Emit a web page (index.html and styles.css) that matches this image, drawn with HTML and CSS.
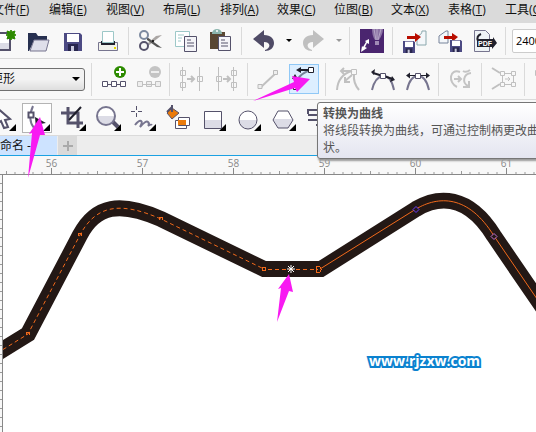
FILE: index.html
```html
<!DOCTYPE html>
<html lang="zh-CN">
<head>
<meta charset="utf-8">
<title>未命名 -1</title>
<link rel="stylesheet" href="styles.css">
</head>
<body>
<svg class="defs" aria-hidden="true">
  <defs>
    <linearGradient id="glass" x1="0" y1="0" x2="0" y2="1">
      <stop offset=".5" stop-color="#fff"/><stop offset=".5" stop-color="#dcdce6"/>
    </linearGradient>
    <symbol id="fly" viewBox="0 0 30 30"><path d="M28 21v7h-7z" fill="#000"/></symbol>
    <symbol id="disk" viewBox="0 0 18 18"><path d="M0 0h16l2 2v16H0z" fill="#4c4a83"/><path d="M3 1h12v8H3z" fill="#fff"/><path d="M4 11h10v7H4z" fill="#28264d"/><path d="M7 13h3v5H7z" fill="#c9c9dc"/></symbol>
    <symbol id="ticks" viewBox="0 0 91 6">
      <path d="M45.500 0v6" stroke="#888"/>
      <path d="M9 4v2M18 4v2M27 4v2M36 4v2M55 4v2M64 4v2M73 4v2M82 4v2" stroke="#999"/>
      <path d="M.5 3v3" stroke="#999"/>
    </symbol>
  </defs>
</svg>
<div class="app">
  <nav class="menu">
    <a href="#">文件(<u>F</u>)</a><a href="#">编辑(<u>E</u>)</a><a href="#">视图(<u>V</u>)</a><a href="#">布局(<u>L</u>)</a><a href="#">排列(<u>A</u>)</a><a href="#">效果(<u>C</u>)</a><a href="#">位图(<u>B</u>)</a><a href="#">文本(<u>X</u>)</a><a href="#">表格(<u>T</u>)</a><a href="#">工具(<u>O</u>)</a>
  </nav>

  <div class="bar standard">
    <button aria-label="新建"><svg viewBox="0 0 24 24"><path d="M2 4h17v17H2z" fill="#fff" stroke="#55526b" stroke-width="2"/><path d="M3 14h15v6H3z" fill="#dcdce6"/><path d="m20 1 1 2 3-1-1 3 2 1-2 1 1 3-3-1-1 2-1-2-3 1 1-3-2-1 2-1-1-3 3 1z" fill="#2d8b00" stroke="#2d8b00"/></svg></button>
    <button aria-label="打开"><svg viewBox="0 0 24 24"><path d="M2 4h8l2 3h9v5H8L3 22H2z" fill="#273050"/><path d="M8 11h15l-3 11H4z" fill="#dfdfea" stroke="#77758f"/></svg></button>
    <button aria-label="保存"><svg viewBox="0 0 24 24"><use href="#disk" x="3" y="4" width="18" height="18"/></svg></button>
    <button aria-label="打印"><svg viewBox="0 0 24 24"><path d="M2.500 13.500h19v8h-19z" fill="#f2f2ec" stroke="#77758f"/><path d="M5 12h14v4H5z" fill="#20202c"/><path d="M6.500 2.500h11v11h-11z" fill="#fff" stroke="#9dc8c8"/><path d="M18 18h2v2h-2z" fill="#e5d800"/></svg></button>
    <i class="sep"></i>
    <button aria-label="剪切"><svg viewBox="0 0 24 24"><path d="m9 17 14-11-6 1-8 7z" fill="#aaa6a4"/><path d="m8 8 15 11-5-1-10-7z" fill="#555"/><circle cx="5" cy="6" r="4" fill="none" stroke="#7d8aa0" stroke-width="2"/><circle cx="5" cy="17" r="4" fill="none" stroke="#55526b" stroke-width="2"/><circle cx="14" cy="12" r="1" fill="#000"/></svg></button>
    <button aria-label="复制"><svg viewBox="0 0 24 24"><path d="M1.500 2.500h14v15h-14z" fill="#fff" stroke="#9dc8c8"/><path d="M4 6h6M4 9h4M4 12h3" stroke="#9dc8c8"/><path d="M10.500 7.500h12v15h-12z" fill="#f4f4f8" stroke="#55526b"/><path d="M13 11h4M13 14h7M13 17h7" stroke="#55526b"/></svg></button>
    <button aria-label="粘贴"><svg viewBox="0 0 24 24"><path d="M1 3h15v17H1z" fill="#594732"/><path d="M3 4q1-4 5-4t5 4v1H3z" fill="#8bb5ad"/><circle cx="8" cy="2" r="1" fill="#fff"/><path d="M9.500 7.500h12v14h-12z" fill="#f4f4f8" stroke="#55526b"/><path d="M12 11h4M12 14h7M12 17h7" stroke="#55526b"/></svg></button>
    <i class="sep"></i>
    <button aria-label="撤消"><svg viewBox="0 0 24 24"><path d="M1 10 12 1v5c7 0 10 4 10 8 0 5-4 8-9 8v-1c6-2 6-8-1-8v6z" fill="#4f4b66"/></svg></button>
    <button class="drop" aria-label="撤消列表"><svg viewBox="0 0 8 4"><path d="M1 0h6L4 3z"/></svg></button>
    <button aria-label="重做"><svg viewBox="0 0 24 24"><path d="M22 10 11 1v5c-7 0-10 4-10 8 0 5 4 8 9 8v-1c-6-2-6-8 1-8v6z" fill="#c0c0c0"/></svg></button>
    <button class="drop" aria-label="重做列表"><svg viewBox="0 0 8 4"><path d="M1 0h6L4 3z" fill="#999"/></svg></button>
    <i class="sep"></i>
    <button aria-label="欢迎屏幕"><svg viewBox="0 0 24 24"><path d="M0 0h24v24H0z" fill="#4a256f"/><path d="M12 0h11q0 5-4 11h-4Q12 7 12 0z" fill="#8b72a4"/><path d="m14 0 2 11M17 0v11M21 0l-3 11" stroke="#b5a5c6"/><path d="M15 12h4v4h-4z" fill="#a18bb5"/><path d="M9 10v5l-2-1-2 4 2 1-6 4 1-6 1 1 3-5-1-1z" fill="#fff"/></svg></button>
    <i class="sep"></i>
    <button aria-label="导入"><svg viewBox="0 0 24 24"><path d="M14 7q5-1 5-5h4v14h-9z" fill="#f4f7fa" stroke="#8aa7ad"/><path d="M4 7h8V4l6 4-6 5v-3H4z" fill="#b90d00"/><use href="#disk" y="12" width="12" height="12"/></svg></button>
    <button aria-label="导出"><svg viewBox="0 0 24 24"><path d="M1 14V7l7-5h2v12z" fill="#f4f7fa" stroke="#77839a"/><path d="M6 7h8V4l6 4-6 5v-3H6z" fill="#b90d00"/><use href="#disk" x="12" y="11" width="12" height="12"/></svg></button>
    <button aria-label="发布为 PDF"><svg class="pdf" viewBox="0 0 24 24"><path d="M1.500 1.500h11l4 4v17h-15z" fill="#eff3f6" stroke="#77758f"/><path d="M8 5q-5 2-3 7" fill="none" stroke="#20202c" stroke-width="2"/><path d="M4 10h16V8l4 6-5 6v-2H4z" fill="#20202c"/><text x="5" y="17">PDF</text></svg></button>
    <i class="sep"></i>
    <input class="zoom" aria-label="缩放级别" value="2400%">
  </div>

  <div class="bar property">
    <select class="mode" aria-label="选取范围模式"><option>矩形</option></select>
    <i class="sep"></i>
    <button aria-label="添加节点"><svg viewBox="0 0 24 24"><circle cx="18" cy="5" r="6" fill="#2d8b00"/><path d="M18 1v8M14 5h8" stroke="#fff" stroke-width="2"/><path d="M5 17.500h14" stroke="#55526b"/><path d="M.5 14.500h5v5h-5zM9.500 14.500h5v5h-5zM18.500 14.500h5v5h-5z" fill="#fff" stroke="#55526b"/></svg></button>
    <button aria-label="删除节点"><svg viewBox="0 0 24 24"><circle cx="18" cy="5" r="6" fill="#c4c4c4"/><path d="M14 5h8" stroke="#eee" stroke-width="2"/><path d="M5 17.500h14M.5 14.500h5v5h-5zM9.500 14.500h5v5h-5zM18.500 14.500h5v5h-5z" fill="#eee" stroke="#c0c0c0"/></svg></button>
    <i class="sep"></i>
    <button aria-label="连接两个节点"><svg class="off" viewBox="0 0 24 24"><path d="M2.500 0v24M19.500 0v24M.5 3.500h5v5h-5zM.5 15.500h5v5h-5zM17.500 9.500h5v5h-5z"/><path class="thick" d="M7 12h7m-3-3 3 3-3 3"/></svg></button>
    <button aria-label="断开曲线"><svg class="off" viewBox="0 0 24 24"><path d="M3.500 0v24M18.500 0v24M1.500 9.500h5v5h-5zM16.500 3.500h5v5h-5zM16.500 15.500h5v5h-5z"/><path class="thick" d="M8 12h7m-3-3 3 3-3 3"/></svg></button>
    <i class="sep"></i>
    <button aria-label="转换为线条"><svg viewBox="0 0 24 24"><path d="M3 20 18 6" stroke="#c0c0c0" stroke-width="2"/><path d="M0 17.500h4v4H0zM15.500 3.500h4v4h-4z" fill="#eee" stroke="#bbb"/></svg></button>
    <button class="hot" aria-label="转换为曲线"><svg viewBox="0 0 24 24"><path d="M3 20Q5 7 19 3" fill="none" stroke="#77839a" stroke-width="2"/><path d="M6 3h12" stroke="#20202c" stroke-width="2"/><path d="m4 3 5-3v6zM0 12l3-5 3 5z" fill="#20202c"/><path d="M16.500.5h5v5h-5zM1.500 17.500h5v5h-5z" fill="#fff" stroke="#20202c"/></svg></button>
    <i class="sep"></i>
    <button aria-label="尖突节点"><svg class="off" viewBox="0 0 24 24"><path class="thick" d="M1 23Q2 8 16 4M23 23q-6-7-5-16"/><path d="M15.500 2.500h5v5h-5z"/><path class="thick" d="M5 4h10M8 1 5 4l3 3M16 8l-7 6m0-4v5h5"/></svg></button>
    <button aria-label="平滑节点"><svg viewBox="0 0 24 24"><path d="M1 23Q4 10 12 9t11 14" fill="none" stroke="#77758f" stroke-width="2"/><path d="m2 6 20 6" stroke="#20202c" stroke-width="2"/><path d="m0 5 4-3-1 6zM24 13l-5 2 2-6z" fill="#20202c"/><path d="M9.500 6.500h5v5h-5z" fill="#fff" stroke="#55526b"/></svg></button>
    <button aria-label="对称节点"><svg viewBox="0 0 24 24"><path d="M1 23Q4 9 12 9t11 14" fill="none" stroke="#77758f" stroke-width="2"/><path d="M2 8.500h20" stroke="#20202c"/><path d="m0 8.500 4-3v6zM24 8.500l-4-3v6z" fill="#20202c"/><path d="M9.500 6.500h5v5h-5z" fill="#fff" stroke="#55526b"/></svg></button>
    <i class="sep"></i>
    <button aria-label="反转方向"><svg class="curve" viewBox="0 0 24 24"><path d="M11 5C0 1-1 16 8 20M5 12h7m-3-3 3 3-3 3M14 4q3 2 7-1M22 6c-8 1-9 10-3 13m1-5v6h-6"/></svg></button>
    <i class="sep"></i>
    <button aria-label="提取子路径"><svg class="off" viewBox="0 0 24 24"><path class="thick" d="m0 1 8 5M0 22l8-5"/><path d="M8.500 4.500h4v4h-4zM8.500 15.500h4v4h-4zM19.500 4.500h4v4h-4zM19.500 15.500h4v4h-4zM10.500 9v6M21.500 9v6M13 6.500h6M13 17.500h6M13 12h5m-2-2 2 2-2 2"/></svg></button>
    <i class="sep"></i>
    <button aria-label="延长曲线"><svg class="off" viewBox="0 0 24 24"><path d="M.5 3.500h5v5h-5zM6 6h12"/></svg></button>
  </div>

  <div class="bar tools">
    <button aria-label="选择"><svg viewBox="0 0 30 30"><path d="m7 3 15 13-5 1 3 7-4 1-3-7-5 4z" fill="#fff" stroke="#55526b" stroke-width="2"/><use href="#fly"/></svg></button>
    <button class="picked" aria-label="形状"><svg viewBox="0 0 30 30"><path d="M11 3C7 12 8 20 12 25" fill="none" stroke="#77758f" stroke-width="2"/><path d="M6.500 9.500h5v5h-5z" fill="#fff" stroke="#55526b" stroke-width="2"/><path d="m13 14 11 6-6 1-4 5z" fill="#20202c"/><use href="#fly"/></svg></button>
    <button aria-label="裁剪"><svg viewBox="0 0 30 30"><path d="M10 4v16h15" fill="none" stroke="#55526b" stroke-width="3"/><path d="M3 10h17v15" fill="none" stroke="#55526b" stroke-width="3"/><path d="M23 4 11 17" stroke="#20202c" stroke-width="2"/><use href="#fly"/></svg></button>
    <button aria-label="缩放"><svg viewBox="0 0 30 30"><path d="m19 18 6 6" stroke="#55526b" stroke-width="4"/><circle cx="13" cy="13" r="9" fill="url(#glass)" stroke="#77758f" stroke-width="2"/><use href="#fly"/></svg></button>
    <button aria-label="手绘"><svg viewBox="0 0 30 30"><path d="M8.500 3v4M8.500 10v4M3 8.500h4M10 8.500h4" stroke="#55526b"/><path d="M7 22q4-5 6-4t-1 6q6-7 8-5t0 4q3-2 4-1" fill="none" stroke="#77758f" stroke-width="2"/><use href="#fly"/></svg></button>
    <button aria-label="智能填充"><svg viewBox="0 0 30 30"><path d="m4 10 5-5 7 5-7 6z" fill="#ea7b0c" stroke="#55526b"/><path d="M9 2v7M4 9l5-5" stroke="#55526b" stroke-width="2"/><path d="M12.500 17.500h11v8h-11z" fill="#fff" stroke="#55526b"/><path d="M15.500 14.500h11v8h-11z" fill="#fff" stroke="#55526b"/><path d="M15 17h8v5h-8z" fill="#ea7b0c"/></svg></button>
    <button aria-label="矩形"><svg viewBox="0 0 30 30"><path d="M6.500 8.500h17v17h-17z" fill="url(#glass)" stroke="#55526b"/><use href="#fly"/></svg></button>
    <button aria-label="椭圆形"><svg viewBox="0 0 30 30"><circle cx="15" cy="17" r="9" fill="url(#glass)" stroke="#55526b"/><use href="#fly"/></svg></button>
    <button aria-label="多边形"><svg viewBox="0 0 30 30"><path d="M10 8h10l5 9-5 8H10l-5-8z" fill="url(#glass)" stroke="#55526b"/><use href="#fly"/></svg></button>
    <button aria-label="基本形状"><svg viewBox="0 0 30 30"><path d="M5 11V7h19M5 12h19M5 17h14v5h-6" fill="none" stroke="#55526b" stroke-width="2"/></svg></button>
  </div>

  <div class="tabs">
    <button class="tab">未命名 -1</button><button class="add" aria-label="新建文档"><svg viewBox="0 0 12 12"><path d="M6 1v10M1 6h10" stroke="#aaa" stroke-width="2"/></svg></button>
  </div>

  <div class="ruler">
    <span>55<svg><use href="#ticks"/></svg></span><span>56<svg><use href="#ticks"/></svg></span><span>57<svg><use href="#ticks"/></svg></span><span>58<svg><use href="#ticks"/></svg></span><span>59<svg><use href="#ticks"/></svg></span><span>60<svg><use href="#ticks"/></svg></span><span>61<svg><use href="#ticks"/></svg></span>
  </div>

  <main class="work">
    <div class="side"></div>
    <div class="page">
      <svg class="art" viewBox="3 175 533 257">
        <path d="M-9 357 28 334 80 235C96 205 120 201 161 219L264 269H321L416 209C438 196 468 194 494 236L548 315" fill="none" stroke="#231815" stroke-width="16"/>
        <g fill="none" stroke="#f26a1b">
          <path d="M-9 357 28 334 80 235C96 205 120 201 161 219L264 269" stroke-dasharray="4 3"/>
          <path d="M268 269.500h50" stroke-dasharray="4 3"/>
          <path d="M320 269 416 209C438 196 468 194 494 236L548 315"/>
          <path d="M26.500 335v-3h3v3M78.500 236v-3h3v3M159.500 220v-3h3v3M262.500 267.500h3v3h-3zM316.500 266.500v6h3l2-3-2-3z" shape-rendering="crispEdges"/>
        </g>
        <path d="m413 209.500 3-3 3 3-3 3z" fill="#231815" stroke="#6a3cff"/>
        <path d="m491 236.500 3-3 3 3-3 3z" fill="#231815" stroke="#c070d0"/>
        <path d="M291 265v8M287 269h8M288 266l6 6M294 266l-6 6" stroke="#fff"/>
      </svg>
      <p class="mark">www.rjzxw.com</p>
    </div>
  </main>

  <div class="tip" role="tooltip"><b>转换为曲线</b><span>将线段转换为曲线，可通过控制柄更改曲线形状。</span></div>
  <svg class="pointers" viewBox="0 0 536 432" aria-hidden="true">
    <path d="M253 101 294 82 292 76 310 79 297 92 295 88zM28 178 32 133 29 134 40 117 45 135 40 135zM277 322 281 288 278 289 289 274 293 292 289 291z" fill="#f81af2"/>
  </svg>
</div>
</body>
</html>
```
FILE: styles.css
```css
* { box-sizing: border-box; }
body {
  margin: 0;
  background: #fff;
  font: 12px/16px "Open Sans", "Noto Sans CJK SC", sans-serif;
  color: #111;
}
button {
  border: 0;
  padding: 0;
  background: none;
  font: inherit;
  color: inherit;
}
.defs { position: absolute; width: 0; height: 0; }
.app {
  position: relative;
  display: flex;
  flex-direction: column;
  min-height: 100vh;
  overflow: hidden;
}
.menu {
  display: flex;
  gap: 19px;
  height: 23px;
  padding-bottom: 4px;
  align-items: center;
  margin-left: -8px;
  background: #dadada;
}
.menu a {
  flex: none;
  width: 38px;
  white-space: nowrap;
  color: #111;
  text-decoration: none;
}
.bar {
  display: flex;
  align-items: center;
  background: #f8f8f8;
  border-bottom: 1px solid #dadada;
}
.bar > * { flex: none; }
.bar button {
  display: flex;
  align-items: center;
  justify-content: center;
  width: 35px;
  height: 30px;
}
.bar svg { width: 24px; height: 24px; overflow: visible; }
.sep {
  width: 1px;
  height: 28px;
  margin: 0 4px 0 3px;
  background: #dadada;
}
.standard { height: 36px; }
.standard > :first-child, .tools > :first-child { margin-left: -15px; }
.bar .drop { width: 15px; }
.bar .drop svg { width: 8px; height: 4px; }
.pdf text { font: bold 7px "Liberation Sans", sans-serif; fill: #fff; }
.zoom {
  width: 80px;
  height: 24px;
  margin-left: 2px;
  padding: 0 3px;
  border: 1px solid #ccc;
  border-radius: 2px;
  background: #fff;
  font: inherit;
  font-size: 11px;
}
.property { height: 41px; }
.property .sep { height: 33px; }
.mode {
  appearance: none;
  width: 105px;
  height: 23px;
  margin: 0 3px 0 -20px;
  padding: 0 10px;
  border: 1px solid #707070;
  border-radius: 3px;
  background: url("data:image/svg+xml,%3Csvg xmlns='http://www.w3.org/2000/svg' width='8' height='5'%3E%3Cpath d='M0 0h8L4 4z'/%3E%3C/svg%3E") no-repeat right 4px center, linear-gradient(#f3f3f3 50%, #dedede);
  font: inherit;
  color: #111;
}
.off path { fill: none; stroke: #c0c0c0; }
.off .thick { stroke-width: 2; }
.curve { fill: none; stroke: #c4c4c4; stroke-width: 2; }
.bar .hot {
  width: 30px;
  margin: 0 3px 0 2px;
  background: #dceeff;
  border: 1px solid #90c8f6;
}
.tools { height: 36px; }
.tools svg { width: 30px; height: 30px; }
.bar .picked {
  width: 30px;
  margin: 0 3px 0 2px;
  background: #fff;
  box-shadow: inset 0 0 0 1px #b4b4b4;
}
.tabs {
  display: flex;
  height: 20px;
  background: #ededed;
  border-bottom: 1px solid #1ba1e2;
}
.tab {
  width: 69px;
  margin: 0 1px 0 -12px;
  background: #cde3ff;
  text-align: left;
  white-space: nowrap;
}
.add {
  display: flex;
  width: 19px;
  align-items: center;
  justify-content: center;
  background: #dadada;
}
.add svg { width: 12px; height: 12px; }
.ruler {
  display: flex;
  height: 19px;
  padding-top: 3px;
  background: #f8f8f8;
  border-bottom: 1px solid #888;
  font-size: 10px;
  line-height: 9px;
  color: #888;
}
.ruler span {
  flex: none;
  width: 91px;
  text-align: center;
}
.ruler span:first-child { margin-left: -85px; }
.ruler svg { display: block; width: 91px; height: 6px; }
.work { display: flex; flex: 1; }
.side {
  flex: none;
  width: 3px;
  border-right: 1px solid #888;
  background: repeating-linear-gradient(#f8f8f8 0 8px, #999 8px 9px);
}
.page {
  position: relative;
  flex: 1;
  min-width: 0;
  overflow: hidden;
}
.art { display: block; width: 533px; height: 257px; }
.mark {
  position: absolute;
  left: 366px;
  top: 176px;
  margin: 0;
  font: bold 14px/20px "Open Sans", sans-serif;
  color: #fff;
  -webkit-text-stroke: 4px #0b82cf;
  paint-order: stroke fill;
}
.tip {
  position: absolute;
  left: 317px;
  top: 102px;
  width: 254px;
  height: 57px;
  padding: 2px 5px;
  border: 1px solid #767676;
  border-radius: 3px;
  background: linear-gradient(#fff, #e4e5f0);
  box-shadow: 1px 2px 2px #999;
  line-height: 17px;
  color: #555;
}
.tip b, .tip span { display: block; }
.pointers {
  position: absolute;
  left: 0;
  top: 0;
  width: 536px;
  height: 432px;
  pointer-events: none;
}
```
